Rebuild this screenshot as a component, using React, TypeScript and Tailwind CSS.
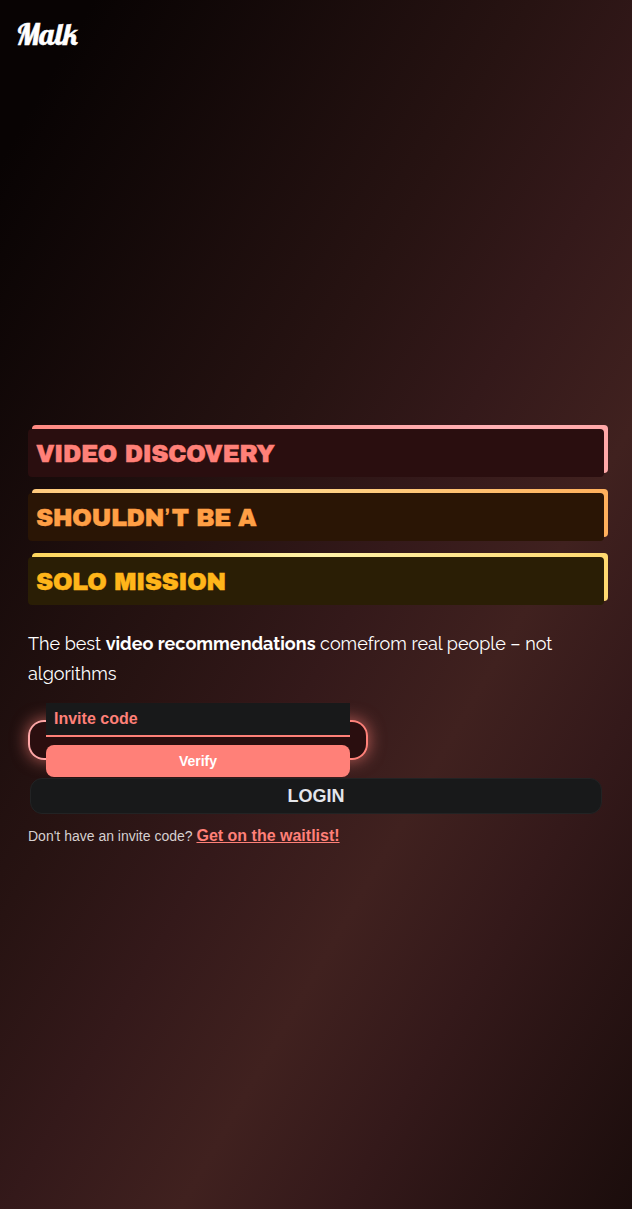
import React from "react";

const lines = [
  {
    text: ["VIDEO DISCOVERY"],
    box: "bg-[#2a0e0f] text-[#ff8078]",
    edge: "bg-[linear-gradient(90deg,#ff8a82,#ffb0b4_80%,#ffa8a8)]",
  },
  {
    text: ["SHOULDN", "T BE A"],
    box: "bg-[#2a1505] text-[#ff9f45]",
    edge: "bg-[linear-gradient(90deg,#ffc97c,#ffdf96_30%,#ffb05c)]",
  },
  {
    text: ["SOLO MISSION"],
    box: "bg-[#2a1e05] text-[#ffb51a]",
    edge: "bg-[linear-gradient(90deg,#ffd75e,#fff2a8_50%,#ffd970)]",
  },
];

export default function App() {
  return (
    <div className="min-h-[1209px] w-full bg-[linear-gradient(120deg,#080303_0%,#080303_7%,#271312_40%,#34191a_53%,#40211f_66%,#34191a_78%,#1b0d0c_100%)] font-['Liberation_Sans',Arial,sans-serif] text-white">
      <header className="h-[425px] pt-4 pl-4">
        <div className="font-['Lobster','Liberation_Serif',serif] text-[30px] leading-9 [-webkit-text-stroke:0.5px_#fff]">Malk</div>
      </header>
      <main className="pr-6 pl-7">
        <h1 className="flex flex-col gap-3">
          {lines.map((l) => (
            <span key={l.text[0]} className="relative block h-[52px] pt-1 pr-1">
              <span className={`absolute top-0 right-0 bottom-1 left-1 rounded-[4px] ${l.edge}`} />
              <span className={`relative block h-12 rounded-[4px] pt-0.5 pl-2 font-['Archivo_Black','Arial_Black','Liberation_Sans',sans-serif] text-[24px] leading-[46px] font-normal tracking-[-0.6px] whitespace-nowrap [-webkit-text-stroke:0.3px_currentColor] ${l.box}`}>
                {l.text[0]}
                {l.text[1] && <span className="inline-block w-[8px] pl-px font-['Liberation_Sans'] text-[23px] leading-none tracking-normal [-webkit-text-stroke:0.8px_currentColor]">’</span>}
                {l.text[1]}
              </span>
            </span>
          ))}
        </h1>
        <p className="mt-6 h-[60px] font-['Raleway','Lato',sans-serif] text-[18px] leading-[30px] whitespace-nowrap">
          The best <b>video recommendations</b> comefrom real people – not
          <br />
          algorithms
        </p>
        <div className="mt-[31px] h-10 w-[340px] rounded-2xl bg-[linear-gradient(100deg,#ffa8a8,#ff8078)] p-[2px] shadow-[0_0_16px_1px_#ff807899]">
          <div className="flex h-9 flex-col items-center justify-center gap-2 rounded-[14px] bg-[#2a0e0f]">
            <div className="flex h-[34px] w-[304px] shrink-0 items-center border-b-2 border-[#ff8078] bg-[#18191a] pl-2 text-base font-bold text-[#ff8078]">Invite code</div>
            <button className="h-8 w-[304px] shrink-0 rounded-lg bg-[#ff8078] text-sm font-bold">Verify</button>
          </div>
        </div>
        <button className="mt-[18px] ml-[2px] block h-9 w-[572px] rounded-xl border border-[#222324] bg-[#18191a] text-lg font-bold text-[#e4e6eb]">LOGIN</button>
        <p className="mt-[10px] text-sm leading-6 text-[#d6d0d0]">
          Don't have an invite code? <a className="text-base font-bold text-[#ff8078] underline">Get on the waitlist!</a>
        </p>
      </main>
    </div>
  );
}
